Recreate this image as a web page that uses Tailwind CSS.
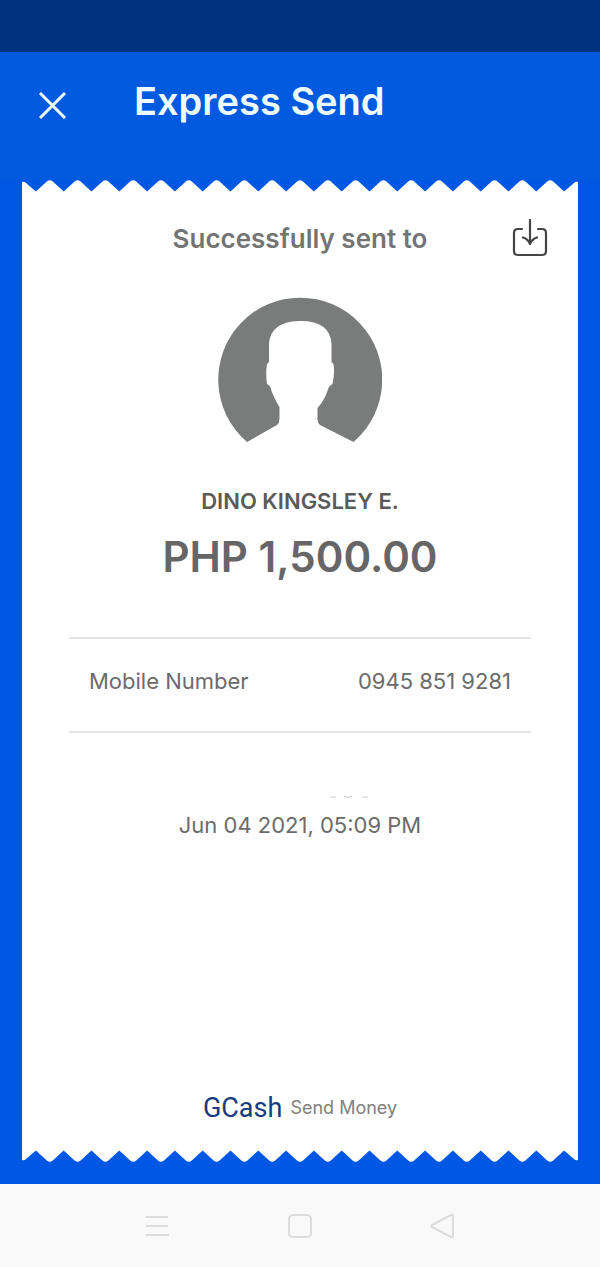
<!DOCTYPE html>
<html lang="en">

<head>
    <meta charset="UTF-8">
    <meta name="viewport" content="width=device-width, initial-scale=1.0">
    <title>Express Send</title>
    <script src="https://cdn.jsdelivr.net/npm/@tailwindcss/browser@4"></script>
</head>

<body class="min-h-screen flex flex-col bg-[#0057e4] font-['Inter',sans-serif] text-[#6b6b6b]">
    <!-- Status bar -->
    <div class="h-[52px] bg-[#00337f]"></div>

    <header class="h-32 pt-[27px] pl-9 flex items-start bg-[#005ae0] text-[#effcff]">
        <button type="button" aria-label="Close" class="mt-2 w-8 h-8 flex items-center justify-center">
            <svg class="w-8 h-8" viewBox="0 0 32 32" fill="none" stroke="currentColor" stroke-width="3">
                <path d="M4 6 29 31M29 6 4 31" />
            </svg>
        </button>
        <h1 class="ml-[66px] text-[38px] leading-[44px] font-semibold">Express Send</h1>
    </header>

    <main class="flex-1 flex flex-col px-[22px] pb-[22px]">
        <!-- Torn edge, top -->
        <svg class="block w-full h-3" viewBox="0 0 555 12" preserveAspectRatio="none" fill="#fff">
            <path id="teeth" d="" />
        </svg>

        <section class="flex-1 flex flex-col items-center bg-white">
            <div class="w-full pt-[27px] px-7 grid grid-cols-[40px_1fr_40px] items-center">
                <h2 class="col-start-2 text-center text-[26px] leading-10 font-semibold text-[#747474]">Successfully sent to</h2>
                <button type="button" aria-label="Save receipt" class="justify-self-center text-[#444]">
                    <svg class="w-9 h-10" viewBox="0 0 36 40" fill="none" stroke="currentColor" stroke-width="2.2" stroke-linecap="round" stroke-linejoin="round">
                        <path d="M10 10H6Q2 10 2 14V32Q2 36 6 36H30Q34 36 34 32V14Q34 10 30 10H26" />
                        <path d="M18 1V24M11 18.500Q16 20 18 25Q20 20 25 18.500" />
                    </svg>
                </button>
            </div>

            <!-- Avatar -->
            <svg class="mt-[38px] w-[164px] h-[146px]" viewBox="0 0 164 146" fill="#7a7c7b">
                <path d="M29 145A82 82 0 1 1 135.500 145L102 128Q99.500 126 99.500 122V111Q106 104 109.500 94Q110.500 89 114.500 87Q117 76 115.500 67L113.500 65V47Q112 24 83 24H81Q52 25 51 47V65L49 67Q47.500 76 49 87Q53 89 53.500 94Q58 105 61.500 110V122Q61.500 126 59 128Z" />
            </svg>

            <p class="mt-[42px] text-[22px] leading-8 font-semibold text-[#5a5a5a]">DINO KINGSLEY E.</p>
            <p class="mt-3 text-[42px] leading-14 font-semibold text-[#666]">PHP 1,500.00</p>

            <div class="mt-[52px] self-stretch mx-[47px]">
                <dl class="flex justify-between px-5 pt-6 pb-8 border-y-2 border-[#e4e4e4] text-[22px] leading-9">
                    <dt>Mobile Number</dt>
                    <dd>0945 851 9281</dd>
                </dl>
            </div>

            <svg class="mt-[62px] ml-24 w-11 h-1" viewBox="0 0 44 4" fill="none" stroke="#c8c8c8">
                <path d="M4 2H10M18 1Q22 4 26 1M36 2H42" />
            </svg>
            <time datetime="2021-06-04T17:09" class="mt-2 text-[22px] leading-9">Jun 04 2021, 05:09 PM</time>

            <footer class="mt-auto pb-6 flex items-center gap-2">
                <span class="font-['Roboto',sans-serif] text-[27px] leading-9 text-[#173a80]">GCash</span>
                <span class="text-lg text-[#808080]">Send Money</span>
            </footer>
        </section>

        <!-- Torn edge, bottom -->
        <svg class="block w-full h-3 -scale-y-100" viewBox="0 0 555 12" preserveAspectRatio="none" fill="#fff">
            <use href="#teeth" />
        </svg>
    </main>

    <nav class="h-[83px] flex items-center justify-center gap-[115px] bg-[#faf9fa] text-[#dcdcdc]">
        <button type="button" aria-label="Recent apps">
            <svg class="w-7 h-7" viewBox="0 0 28 28" fill="none" stroke="currentColor" stroke-width="2">
                <path d="M3 5H25M3 14H25M3 23H26" />
            </svg>
        </button>
        <button type="button" aria-label="Home">
            <svg class="w-7 h-7" viewBox="0 0 28 28" fill="none" stroke="currentColor" stroke-width="2">
                <rect x="3" y="3" width="22" height="22" rx="4" />
            </svg>
        </button>
        <button type="button" aria-label="Back">
            <svg class="w-7 h-7" viewBox="0 0 28 28" fill="none" stroke="currentColor" stroke-width="2" stroke-linejoin="round">
                <path d="M3 13Q2 14 3 15L22 25Q24 26 24 24V4Q24 2 22 3Z" />
            </svg>
        </button>
    </nav>

    <script>
        // 20 teeth across the width of the receipt
        const step = 555 / 20;
        let d = 'M0 12V2Q2 1 4 3L' + (step / 2) + ' 11.5';
        for (let i = 1; i < 20; i++) {
            const x = i * step;
            d += `L${x - 3} 1.500Q${x} -1 ${x + 3} 1.500L${x + step / 2} 11.500`;
        }
        d += 'L551 3Q553 1 555 2V12Z';
        document.getElementById('teeth').setAttribute('d', d);
    </script>
</body>

</html>
